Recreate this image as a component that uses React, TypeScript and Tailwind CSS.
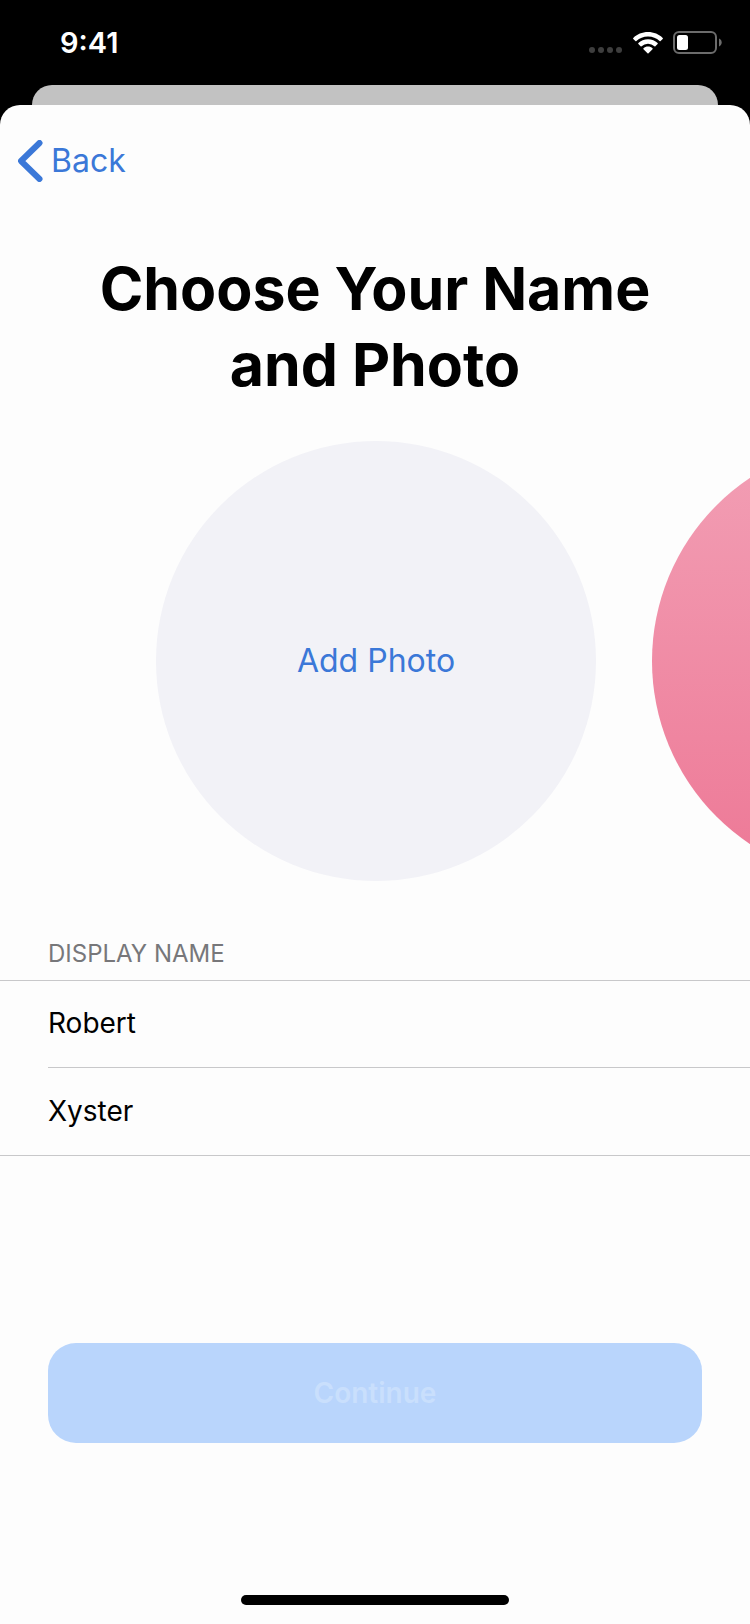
import { useState } from "react";

const fields = [
  { id: "first-name", label: "First name", initial: "Robert" },
  { id: "last-name", label: "Last name", initial: "Xyster" },
];

function StatusBar() {
  return (
    <div className="flex h-[85px] items-center justify-between pl-[60px] pr-7 text-white">
      <span className="text-[29px] leading-8 font-semibold">9:41</span>
      <div className="flex items-center gap-[10px]">
        <svg className="h-[22px] w-9" viewBox="0 0 36 22" fill="#3e3e3e" aria-hidden="true">
          <circle cx="5" cy="18" r="3" />
          <circle cx="14" cy="18" r="3" />
          <circle cx="23" cy="18" r="3" />
          <circle cx="32" cy="18" r="3" />
        </svg>
        <svg className="h-[22px] w-[30px]" viewBox="0 0 30 22" fill="currentColor" aria-hidden="true">
          <path d="M15 0C20.8 0 26 2.2 29.7 5.9a.7.7 0 0 1 0 1L27.6 9a.7.7 0 0 1-1 0A16.6 16.6 0 0 0 15 4.4 16.6 16.6 0 0 0 3.4 9a.7.7 0 0 1-1 0L.3 6.9a.7.7 0 0 1 0-1C4 2.2 9.2 0 15 0Z" />
          <path d="M15 7.3c3.8 0 7.2 1.4 9.6 3.8a.7.7 0 0 1 0 1l-2.2 2.1a.7.7 0 0 1-1 0A9.3 9.3 0 0 0 15 11.7a9.3 9.3 0 0 0-6.4 2.5.7.7 0 0 1-1 0l-2.2-2.1a.7.7 0 0 1 0-1C7.8 8.7 11.2 7.3 15 7.3Z" />
          <path d="M15 14.6c1.8 0 3.4.6 4.5 1.7a.7.7 0 0 1 0 1l-4 4a.7.7 0 0 1-1 0l-4-4a.7.7 0 0 1 0-1c1.1-1.1 2.7-1.7 4.5-1.7Z" />
        </svg>
        <svg className="h-[23px] w-[49px]" viewBox="0 0 49 23" aria-hidden="true">
          <rect x="1" y="1" width="42" height="21" rx="5" fill="none" stroke="#6c6c6c" strokeWidth="2" />
          <rect x="4" y="4" width="11" height="15" rx="2.5" fill="#fff" />
          <path d="M46 7.5c1.8.8 2.7 2.2 2.7 4s-.9 3.2-2.7 4Z" fill="#6c6c6c" />
        </svg>
      </div>
    </div>
  );
}

function PhotoCarousel() {
  return (
    <div className="flex gap-14 overflow-hidden pl-[calc(50%-219px)]">
      <button
        type="button"
        className="size-[440px] shrink-0 rounded-full bg-[#f2f2f7] text-[32px] leading-10 text-[#3b78d8]"
      >
        Add Photo
      </button>
      <button
        type="button"
        aria-label="Pink avatar"
        className="size-[440px] shrink-0 rounded-full bg-linear-to-b from-[#f29fb5] to-[#ed7896]"
      />
    </div>
  );
}

function NameFields() {
  const [values, setValues] = useState(fields.map((field) => field.initial));

  return (
    <fieldset>
      <legend className="pb-[10px] pl-12 text-[24px] leading-8 text-[#77777a]">DISPLAY NAME</legend>
      <div className="border-y border-[#c8c8ca]">
        {fields.map((field, i) => (
          <div key={field.id} className="pl-12">
            <input
              id={field.id}
              type="text"
              aria-label={field.label}
              value={values[i]}
              onChange={(e) => setValues(values.map((v, j) => (j === i ? e.target.value : v)))}
              className={
                i < fields.length - 1
                  ? "block h-[87px] w-full border-b border-[#c8c8ca] pb-0.5 text-[28px] outline-none"
                  : "block h-[87px] w-full pb-0.5 text-[28px] outline-none"
              }
            />
          </div>
        ))}
      </div>
    </fieldset>
  );
}

export default function App() {
  return (
    <div className="flex min-h-screen flex-col bg-black font-[Inter,'Liberation_Sans',sans-serif] text-black">
      <StatusBar />

      {/* Edge of the card behind the sheet */}
      <div className="mx-8 h-5 rounded-t-[20px] bg-[#c2c2c2]" />

      <main className="flex flex-1 flex-col rounded-t-[20px] bg-[#fdfdfd]">
        <a href="#back" className="mt-8 ml-[18px] flex items-center gap-2 self-start text-[32px] leading-12 text-[#3b78d8]">
          <svg className="h-[42px] w-[25px]" viewBox="0 0 25 42" fill="none" aria-hidden="true">
            <path d="M21.5 3 3 21l18.5 18" stroke="#3b78d8" strokeWidth="6" strokeLinecap="round" strokeLinejoin="round" />
          </svg>
          Back
        </a>

        <h1 className="mt-[66px] mb-[38px] text-center text-[59px] leading-[76px] font-bold">
          Choose Your Name
          <br />
          and Photo
        </h1>

        <PhotoCarousel />

        <div className="mt-[57px]">
          <NameFields />
        </div>

        <div className="mt-auto flex flex-col px-12 pt-12">
          <button
            type="button"
            disabled
            className="h-[100px] rounded-[28px] bg-[#b9d5fc] text-[28px] font-semibold text-[#c9dffc]"
          >
            Continue
          </button>
        </div>

        <div className="mx-auto mt-[152px] mb-[19px] h-[10px] w-[268px] rounded-full bg-black" />
      </main>
    </div>
  );
}
